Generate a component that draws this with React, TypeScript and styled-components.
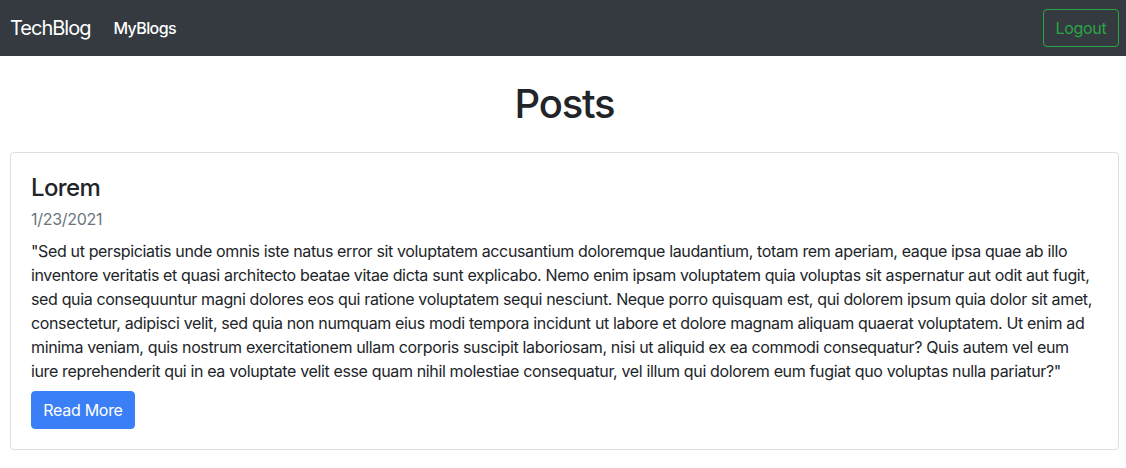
import React from "react";
import styled, { createGlobalStyle } from "styled-components";

const GlobalStyle = createGlobalStyle`
  * { box-sizing: border-box; }
  body {
    margin: 0;
    font-family: Inter, "Liberation Sans", Arial, sans-serif;
    font-size: 16px;
    line-height: 1.5;
    color: #212529;
    background: #fff;
  }
`;

const Navbar = styled.nav`
  height: 56px;
  background: #343a40;
  display: flex;
  align-items: center;
  justify-content: space-between;
  padding: 0 7px 0 10px;
`;

const NavLeft = styled.div`
  display: flex;
  align-items: center;
`;

const Brand = styled.a`
  color: #fff;
  font-size: 20px;
  line-height: 30px;
  margin-right: 15px;
  letter-spacing: -1px;
  text-decoration: none;
`;

const NavLink = styled.a`
  color: #fff;
  font-size: 16px;
  font-weight: 500;
  padding: 8px;
  letter-spacing: -0.6px;
  text-decoration: none;
`;

const OutlineButton = styled.button`
  font-family: inherit;
  font-size: 16px;
  line-height: 24px;
  padding: 6px 0;
  height: 38px;
  width: 76px;
  white-space: nowrap;
  letter-spacing: -0.3px;
  background: transparent;
  color: #28a745;
  border: 1px solid #28a745;
  border-radius: 4px;
`;

const Main = styled.main`
  padding: 0 7px 0 10px;
`;

const Title = styled.h1`
  margin: 24px 0 24px;
  text-align: center;
  font-size: 40px;
  font-weight: 500;
  line-height: 48px;
  letter-spacing: -1.2px;
`;

const Card = styled.article`
  border: 1px solid rgba(0, 0, 0, 0.125);
  border-radius: 4px;
  padding: 20px;
`;

const CardTitle = styled.h4`
  margin: 0 0 5px;
  font-size: 24px;
  font-weight: 500;
  line-height: 29px;
  letter-spacing: -0.6px;
`;

const CardDate = styled.div`
  color: #6c757d;
  font-size: 16px;
  line-height: 24px;
  margin-bottom: 8px;
  letter-spacing: -0.3px;
`;

const CardText = styled.p`
  margin: 0 0 8px;
  font-size: 16px;
  line-height: 24px;
  letter-spacing: -0.36px;
`;

const PrimaryButton = styled.button`
  font-family: inherit;
  font-size: 16px;
  line-height: 24px;
  padding: 6px 0;
  height: 38px;
  width: 104px;
  white-space: nowrap;
  letter-spacing: -0.3px;
  background: #3b7ff6;
  color: #fff;
  border: 1px solid #3b7ff6;
  border-radius: 4px;
`;

const text =
  '"Sed ut perspiciatis unde omnis iste natus error sit voluptatem accusantium doloremque laudantium, totam rem aperiam, eaque ipsa quae ab illo inventore veritatis et quasi architecto beatae vitae dicta sunt explicabo. Nemo enim ipsam voluptatem quia voluptas sit aspernatur aut odit aut fugit, sed quia consequuntur magni dolores eos qui ratione voluptatem sequi nesciunt. Neque porro quisquam est, qui dolorem ipsum quia dolor sit amet, consectetur, adipisci velit, sed quia non numquam eius modi tempora incidunt ut labore et dolore magnam aliquam quaerat voluptatem. Ut enim ad minima veniam, quis nostrum exercitationem ullam corporis suscipit laboriosam, nisi ut aliquid ex ea commodi consequatur? Quis autem vel eum iure reprehenderit qui in ea voluptate velit esse quam nihil molestiae consequatur, vel illum qui dolorem eum fugiat quo voluptas nulla pariatur?"';

export default function App() {
  return (
    <>
      <GlobalStyle />
      <Navbar>
        <NavLeft>
          <Brand href="#">TechBlog</Brand>
          <NavLink href="#">MyBlogs</NavLink>
        </NavLeft>
        <OutlineButton>Logout</OutlineButton>
      </Navbar>
      <Main>
        <Title>Posts</Title>
        <Card>
          <CardTitle>Lorem</CardTitle>
          <CardDate>1/23/2021</CardDate>
          <CardText>{text}</CardText>
          <PrimaryButton>Read More</PrimaryButton>
        </Card>
      </Main>
    </>
  );
}
